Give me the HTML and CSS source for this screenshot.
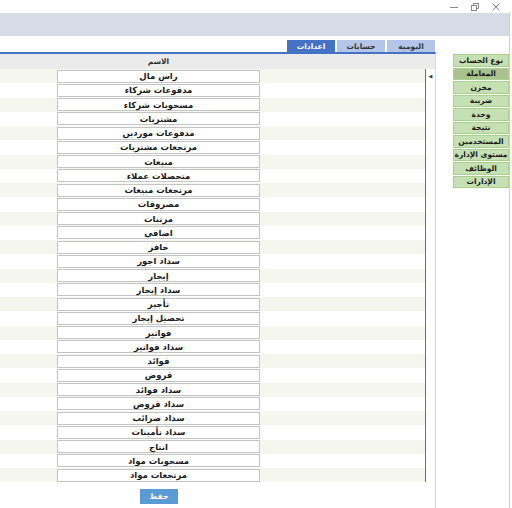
FILE: index.html
```html
<!DOCTYPE html>
<html lang="ar">
<head>
    <meta charset="UTF-8">
    <title>اعدادات</title>
    <link rel="stylesheet" href="styles.css">
</head>
<body>
    <div class="window">
        <div class="titlebar">
            <span class="ctl">
                <svg width="8" height="8" viewBox="0 0 8 8"><path d="M0 4.5h8" stroke="#8a8a8a" stroke-width="1"/></svg>
            </span>
            <span class="ctl">
                <svg width="8" height="8" viewBox="0 0 8 8"><rect x="0.5" y="2.5" width="5" height="5" fill="none" stroke="#8a8a8a"/><path d="M2.5 2.5V0.5h5v5h-2" fill="none" stroke="#8a8a8a"/></svg>
            </span>
            <span class="ctl">
                <svg width="8" height="8" viewBox="0 0 8 8"><path d="M0.5 0.5l7 7M7.5 0.5l-7 7" stroke="#8a8a8a" stroke-width="1"/></svg>
            </span>
        </div>
        <div class="ribbon"></div>

        <div class="main">
            <div class="content">
                <div class="tabs">
                    <div class="tab active">اعدادات</div>
                    <div class="tab">حسابات</div>
                    <div class="tab">اليومية</div>
                </div>

                <div class="grid">
                    <div class="grid-head">
                        <div class="head-cell"><span class="head-label">الاسم</span></div>
                        <div class="row-marker"></div>
                    </div>
                    <div class="grid-body">
                        <div class="row"><div class="cell"><div class="box">راس مال</div></div><div class="row-marker">&#9664;</div></div>
                        <div class="row"><div class="cell"><div class="box">مدفوعات شركاء</div></div><div class="row-marker"></div></div>
                        <div class="row"><div class="cell"><div class="box">مسحوبات شركاء</div></div><div class="row-marker"></div></div>
                        <div class="row"><div class="cell"><div class="box">مشتريات</div></div><div class="row-marker"></div></div>
                        <div class="row"><div class="cell"><div class="box">مدفوعات موردين</div></div><div class="row-marker"></div></div>
                        <div class="row"><div class="cell"><div class="box">مرتجعات مشتريات</div></div><div class="row-marker"></div></div>
                        <div class="row"><div class="cell"><div class="box">مبيعات</div></div><div class="row-marker"></div></div>
                        <div class="row"><div class="cell"><div class="box">متحصلات عملاء</div></div><div class="row-marker"></div></div>
                        <div class="row"><div class="cell"><div class="box">مرتجعات مبيعات</div></div><div class="row-marker"></div></div>
                        <div class="row"><div class="cell"><div class="box">مصروفات</div></div><div class="row-marker"></div></div>
                        <div class="row"><div class="cell"><div class="box">مرتبات</div></div><div class="row-marker"></div></div>
                        <div class="row"><div class="cell"><div class="box">اضافي</div></div><div class="row-marker"></div></div>
                        <div class="row"><div class="cell"><div class="box">حافز</div></div><div class="row-marker"></div></div>
                        <div class="row"><div class="cell"><div class="box">سداد اجور</div></div><div class="row-marker"></div></div>
                        <div class="row"><div class="cell"><div class="box">إيجار</div></div><div class="row-marker"></div></div>
                        <div class="row"><div class="cell"><div class="box">سداد إيجار</div></div><div class="row-marker"></div></div>
                        <div class="row"><div class="cell"><div class="box">تأجير</div></div><div class="row-marker"></div></div>
                        <div class="row"><div class="cell"><div class="box">تحصيل إيجار</div></div><div class="row-marker"></div></div>
                        <div class="row"><div class="cell"><div class="box">فواتير</div></div><div class="row-marker"></div></div>
                        <div class="row"><div class="cell"><div class="box">سداد فواتير</div></div><div class="row-marker"></div></div>
                        <div class="row"><div class="cell"><div class="box">فوائد</div></div><div class="row-marker"></div></div>
                        <div class="row"><div class="cell"><div class="box">قروض</div></div><div class="row-marker"></div></div>
                        <div class="row"><div class="cell"><div class="box">سداد فوائد</div></div><div class="row-marker"></div></div>
                        <div class="row"><div class="cell"><div class="box">سداد قروض</div></div><div class="row-marker"></div></div>
                        <div class="row"><div class="cell"><div class="box">سداد ضرائب</div></div><div class="row-marker"></div></div>
                        <div class="row"><div class="cell"><div class="box">سداد تأمينات</div></div><div class="row-marker"></div></div>
                        <div class="row"><div class="cell"><div class="box">انتاج</div></div><div class="row-marker"></div></div>
                        <div class="row"><div class="cell"><div class="box">مسحوبات مواد</div></div><div class="row-marker"></div></div>
                        <div class="row"><div class="cell"><div class="box">مرتجعات مواد</div></div><div class="row-marker"></div></div>
                    </div>
                    <div class="grid-foot">
                        <div class="foot-cell"><button class="save">حفظ</button></div>
                        <div class="row-marker"></div>
                    </div>
                </div>
            </div>

            <div class="sidebar">
                <div class="side-btn">نوع الحساب</div>
                <div class="side-btn selected">المعاملة</div>
                <div class="side-btn">مخزن</div>
                <div class="side-btn">ضريبة</div>
                <div class="side-btn">وحدة</div>
                <div class="side-btn">نتيجة</div>
                <div class="side-btn">المستخدمين</div>
                <div class="side-btn">مستوى الإدارة</div>
                <div class="side-btn">الوظائف</div>
                <div class="side-btn">الإدارات</div>
            </div>
        </div>
    </div>
</body>
</html>
```

FILE: styles.css
```css
html, body {
    margin: 0;
    padding: 0;
    background-color: #ffffff;
}
body {
    font-family: 'DejaVu Sans', 'Noto Sans', sans-serif;
    font-size: 8px;
    font-weight: bold;
    color: #1a1a1a;
    width: 512px;
    height: 508px;
    overflow: hidden;
}
.window {
    width: 510px;
    height: 508px;
}

/* title bar */
.titlebar {
    height: 13px;
    display: flex;
    justify-content: flex-end;
    align-items: center;
    padding-right: 10px;
    gap: 13px;
}
.ctl {
    display: flex;
    width: 8px;
    height: 8px;
}
.ribbon {
    height: 23px;
    background-color: #d6dce5;
    border-right: 1px solid #cfcfcf;
}

.main {
    display: flex;
    height: 472px;
    border-right: 1px solid #cfcfcf;
}

/* content */
.content {
    width: 436px;
    display: flex;
    flex-direction: column;
}
.tabs {
    display: flex;
    justify-content: flex-end;
    gap: 2px;
    margin-top: 4px;
    padding-right: 1px;
    height: 12px;
}
.tab {
    width: 48px;
    background-color: #b4c6e7;
    color: #333333;
    display: flex;
    align-items: center;
    justify-content: center;
    font-size: 7.5px;
}
.tab.active {
    background-color: #4472c4;
    color: #ffffff;
}

.grid {
    border-top: 2px solid #4472c4;
    border-right: 1px solid #d8d8d8;
    flex: 1;
    display: flex;
    flex-direction: column;
}
.grid-head {
    display: flex;
    height: 15px;
    background-color: #ebebeb;
}
.head-cell {
    flex: 1;
    display: flex;
    align-items: center;
    padding-left: 57px;
}
.head-label {
    width: 203px;
    text-align: center;
    font-size: 7.5px;
    color: #333333;
}
.row-marker {
    width: 9px;
    font-size: 5px;
    color: #333333;
    display: flex;
    align-items: center;
    justify-content: center;
    font-weight: normal;
}
.grid-body {
    display: flex;
    flex-direction: column;
}
.row {
    display: flex;
    height: 14.25px;
}
.row:nth-child(odd) .cell {
    background-color: #f5f6ee;
}
.cell {
    flex: 1;
    border-right: 1px solid #6e6e6e;
    display: flex;
    align-items: center;
    padding-left: 57px;
}
.box {
    width: 201px;
    height: 11px;
    background-color: #ffffff;
    border: 1px solid #c4c4c4;
    display: flex;
    align-items: center;
    justify-content: center;
    direction: rtl;
    font-size: 8.5px;
}

.grid-foot {
    flex: 1;
    display: flex;
}
.foot-cell {
    flex: 1;
    padding-top: 7px;
    padding-left: 140px;
}
.save {
    width: 38px;
    height: 15px;
    border: none;
    background-color: #5b9bd5;
    color: #ffffff;
    font-family: 'DejaVu Sans', sans-serif;
    font-size: 7.5px;
    font-weight: bold;
    padding: 0;
}

/* side buttons */
.sidebar {
    margin-top: 18px;
    margin-left: 17px;
    width: 56px;
    display: flex;
    flex-direction: column;
    align-self: flex-start;
}
.side-btn {
    box-sizing: border-box;
    height: 12.5px;
    margin-bottom: 1px;
    background-color: #c5e0b3;
    border: 1px solid #a9d08e;
    display: flex;
    align-items: center;
    justify-content: center;
    font-size: 7.5px;
    color: #1a1a1a;
    direction: rtl;
}
.side-btn.selected {
    background-color: #a9c28e;
}
```
